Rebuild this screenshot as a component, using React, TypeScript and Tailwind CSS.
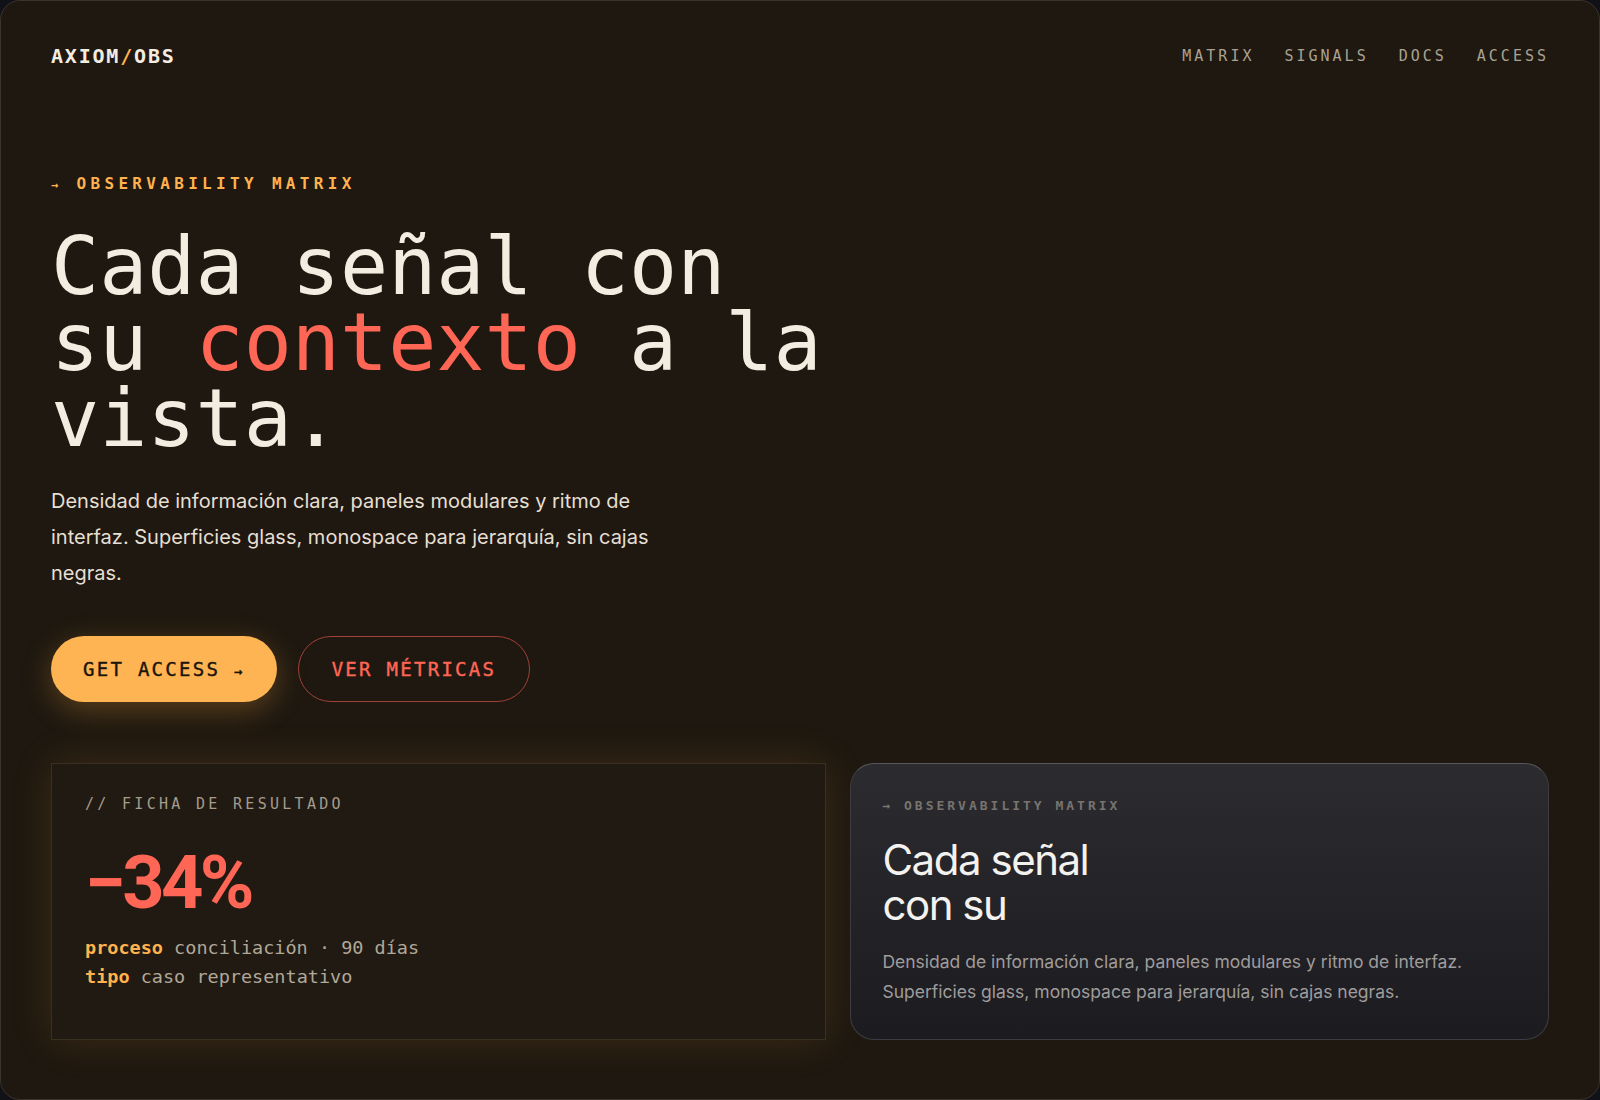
const mono = "font-['DejaVu_Sans_Mono','Liberation_Mono',monospace]";
const sans = "font-['Inter','Noto_Sans',sans-serif]";

const navItems = ["MATRIX", "SIGNALS", "DOCS", "ACCESS"];

function Header() {
  return (
    <header className="flex items-center justify-between h-[30px]">
      <div className={`${mono} text-[20px] font-bold tracking-[0.09em] text-[#f3ede1]`}>
        AXIOM<span className="text-[#ffb24d]">/</span>OBS
      </div>
      <nav className="flex items-center gap-[30px]">
        {navItems.map((item) => (
          <a key={item} href="#" className={`${mono} text-[15px] tracking-[0.2em] text-[#aaa293]`}>
            {item}
          </a>
        ))}
      </nav>
    </header>
  );
}

function Hero() {
  return (
    <section className="flex flex-col">
      <div className={`${mono} mt-[103px] h-[20px] leading-[20px] text-[16px] font-bold tracking-[0.27em] text-[#ffb24d]`}>
        <span className="mr-[14px] text-[12px]">→</span>OBSERVABILITY MATRIX
      </div>
      <h1 className={`${mono} mt-[35px] max-w-[800px] text-[80px] leading-[76px] font-normal text-[#f3ede1]`}>
        Cada señal con su <span className="text-[#ff6655]">contexto</span> a la vista.
      </h1>
      <p className={`${sans} mt-[26px] max-w-[640px] text-[20px] leading-[36px] text-[#e6dfd2]`}>
        Densidad de información clara, paneles modulares y ritmo de interfaz. Superficies glass, monospace para jerarquía, sin cajas negras.
      </p>
      <div className="mt-[45px] flex items-center gap-[21px]">
        <button className={`${mono} h-[66px] px-[32px] rounded-full bg-[#ffb453] text-[#1b140b] text-[19px] tracking-[0.12em] [-webkit-text-stroke:0.4px_#1b140b] shadow-[0_8px_30px_rgba(255,170,60,0.28)]`}>
          GET ACCESS <span className="text-[14px]">→</span>
        </button>
        <button className={`${mono} h-[66px] px-[33px] rounded-full border border-[#9e4136] text-[#ff6655] text-[19px] tracking-[0.12em] [-webkit-text-stroke:0.4px_#ff6655]`}>
          VER MÉTRICAS
        </button>
      </div>
    </section>
  );
}

function ResultCard() {
  return (
    <div className="flex flex-col border border-[#3a3020] bg-[#211a12] px-[33px] pt-[30px] shadow-[0_0_40px_rgba(255,165,60,0.14)]">
      <div className={`${mono} h-[20px] leading-[20px] text-[15px] tracking-[0.22em] text-[#a59c8c]`}>
        // FICHA DE RESULTADO
      </div>
      <div className="font-['Roboto','Inter',sans-serif] mt-[33px] text-[74px] leading-[72px] font-bold tracking-[-0.05em] text-[#ff6655]">
        −34%
      </div>
      <div className={`${mono} mt-[14px] text-[18.5px] leading-[29px] text-[#b0a898]`}>
        <div>
          <span className="font-bold text-[#ffb24d]">proceso</span> conciliación · 90 días
        </div>
        <div>
          <span className="font-bold text-[#ffb24d]">tipo</span> caso representativo
        </div>
      </div>
    </div>
  );
}

function GlassCard() {
  return (
    <div className="flex flex-col rounded-[24px] border border-[#3d3c42] border-t-[#57565b] bg-gradient-to-b from-[#2c2b30] to-[#1c1b20] px-[31px] pt-[34px] pb-[32px]">
      <div className={`${mono} h-[16px] leading-[16px] text-[13px] font-bold tracking-[0.23em] text-[#77746f]`}>
        → OBSERVABILITY MATRIX
      </div>
      <h2 className={`${sans} mt-[23px] max-w-[260px] text-[42px] leading-[45px] font-normal tracking-[-0.035em] text-[#f4f2ef]`}>
        Cada señal con su
      </h2>
      <p className={`${sans} mt-[20px] max-w-[630px] text-[17.5px] leading-[30px] text-[#9f9c9b]`}>
        Densidad de información clara, paneles modulares y ritmo de interfaz. Superficies glass, monospace para jerarquía, sin cajas negras.
      </p>
    </div>
  );
}

export default function App() {
  return (
    <div className="w-[1600px] h-[1100px] bg-[#111217]">
      <div className="h-full rounded-[20px] border border-[#3a342b] bg-[#1e1810] px-[50px] pt-[40px] overflow-hidden">
        <Header />
        <Hero />
        <div className="mt-[61px] grid grid-cols-[1.11fr_1fr] gap-[24px]">
          <ResultCard />
          <GlassCard />
        </div>
      </div>
    </div>
  );
}
